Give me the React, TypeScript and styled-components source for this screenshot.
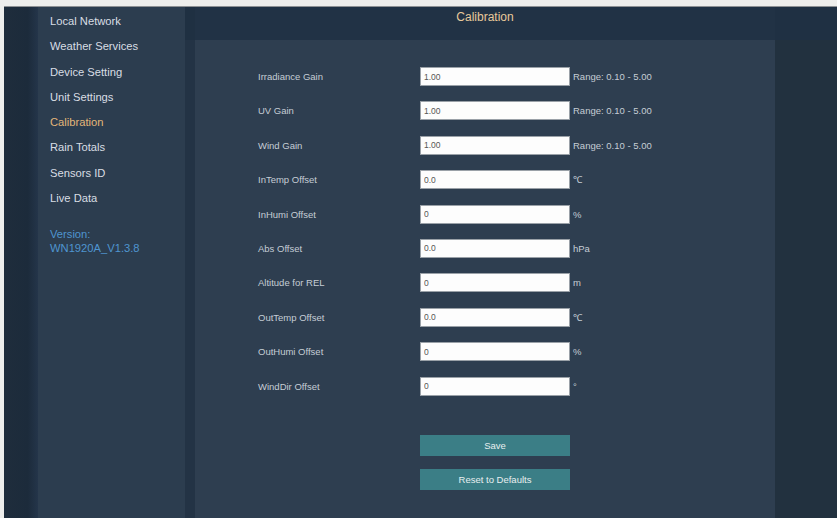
import React from "react";
import styled, { createGlobalStyle } from "styled-components";

const Global = createGlobalStyle`
  html, body { margin: 0; padding: 0; background: #eeeeec; }
  body { font-family: "Liberation Sans", Arial, sans-serif; }
  * { box-sizing: border-box; }
`;

const Page = styled.div`
  width: 837px;
  height: 518px;
  padding-top: 6px;
  padding-left: 4px;
  background: #eeeeec;
  overflow: hidden;
`;

const Frame = styled.div`
  display: flex;
  height: 512px;
  border-top: 1px solid #8e9194;
  background: #223244;
`;

const LeftEdge = styled.div`
  width: 34px;
  background: linear-gradient(90deg, #1f2d3c 0%, #1c2b3b 70%, #24354a 100%);
`;

const Sidebar = styled.nav`
  width: 147px;
  background: #2c3d4f;
  padding: 7px 0 0 12px;
  display: flex;
  flex-direction: column;
`;

const NavItem = styled.div<{ $active?: boolean }>`
  height: 25.3px;
  line-height: 15px;
  font-size: 11.2px;
  color: ${(p) => (p.$active ? "#e3b679" : "#d9dee4")};
`;

const Version = styled.div`
  margin-top: 11px;
  font-size: 11.2px;
  line-height: 14px;
  color: #4f95d0;
`;

const Gutter = styled.div`
  width: 10px;
  background: linear-gradient(180deg, #1f3042 0px, #1f3042 33px, #233345 33px);
`;

const MainCol = styled.main`
  width: 580px;
  display: flex;
  flex-direction: column;
`;

const Header = styled.header`
  height: 33px;
  background: #213245;
  display: flex;
  justify-content: center;
  padding-top: 3px;
`;

const Title = styled.h1`
  margin: 0;
  font-size: 12px;
  font-weight: normal;
  line-height: 15px;
  color: #e8c99a;
`;

const Panel = styled.section`
  flex: 1;
  background: #2e3e50;
  padding: 27px 0 0 63px;
`;

const Form = styled.div`
  display: grid;
  grid-template-columns: 162px 150px auto;
  grid-auto-rows: 34.4px;
  align-items: start;
`;

const Label = styled.div`
  height: 19px;
  line-height: 19px;
  font-size: 9.5px;
  color: #c5cdd5;
`;

const Input = styled.input`
  width: 150px;
  height: 19px;
  border: 1px solid #9aa1a8;
  background: #fdfdfd;
  padding: 0 3px;
  font-family: "Liberation Sans", Arial, sans-serif;
  font-size: 8.5px;
  color: #555;
  outline: none;
`;

const Unit = styled.div`
  height: 19px;
  line-height: 19px;
  padding-left: 3px;
  font-size: 9.5px;
  color: #c5cdd5;
`;

const Actions = styled.div`
  margin: 24px 0 0 162px;
  display: flex;
  flex-direction: column;
  gap: 13px;
`;

const Button = styled.button`
  width: 150px;
  height: 21px;
  border: none;
  background: #3b7e86;
  color: #e8eef0;
  font-family: "Liberation Sans", Arial, sans-serif;
  font-size: 9.5px;
  padding: 0;
  cursor: pointer;
`;

const Right = styled.div`
  flex: 1;
  background: linear-gradient(180deg, #1f3043 0px, #1f3043 33px, #22313f 33px);
`;

const nav = [
  "Local Network",
  "Weather Services",
  "Device Setting",
  "Unit Settings",
  "Calibration",
  "Rain Totals",
  "Sensors ID",
  "Live Data",
];

const rows: [string, string, string][] = [
  ["Irradiance Gain", "1.00", "Range: 0.10 - 5.00"],
  ["UV Gain", "1.00", "Range: 0.10 - 5.00"],
  ["Wind Gain", "1.00", "Range: 0.10 - 5.00"],
  ["InTemp Offset", "0.0", "℃"],
  ["InHumi Offset", "0", "%"],
  ["Abs Offset", "0.0", "hPa"],
  ["Altitude for REL", "0", "m"],
  ["OutTemp Offset", "0.0", "℃"],
  ["OutHumi Offset", "0", "%"],
  ["WindDir Offset", "0", "°"],
];

export default function App() {
  return (
    <>
      <Global />
      <Page>
        <Frame>
          <LeftEdge />
          <Sidebar>
            {nav.map((n) => (
              <NavItem key={n} $active={n === "Calibration"}>
                {n}
              </NavItem>
            ))}
            <Version>
              Version:
              <br />
              WN1920A_V1.3.8
            </Version>
          </Sidebar>
          <Gutter />
          <MainCol>
            <Header>
              <Title>Calibration</Title>
            </Header>
            <Panel>
              <Form>
                {rows.map(([l, v, u]) => (
                  <React.Fragment key={l}>
                    <Label>{l}</Label>
                    <Input defaultValue={v} />
                    <Unit>{u}</Unit>
                  </React.Fragment>
                ))}
              </Form>
              <Actions>
                <Button>Save</Button>
                <Button>Reset to Defaults</Button>
              </Actions>
            </Panel>
          </MainCol>
          <Right />
        </Frame>
      </Page>
    </>
  );
}
